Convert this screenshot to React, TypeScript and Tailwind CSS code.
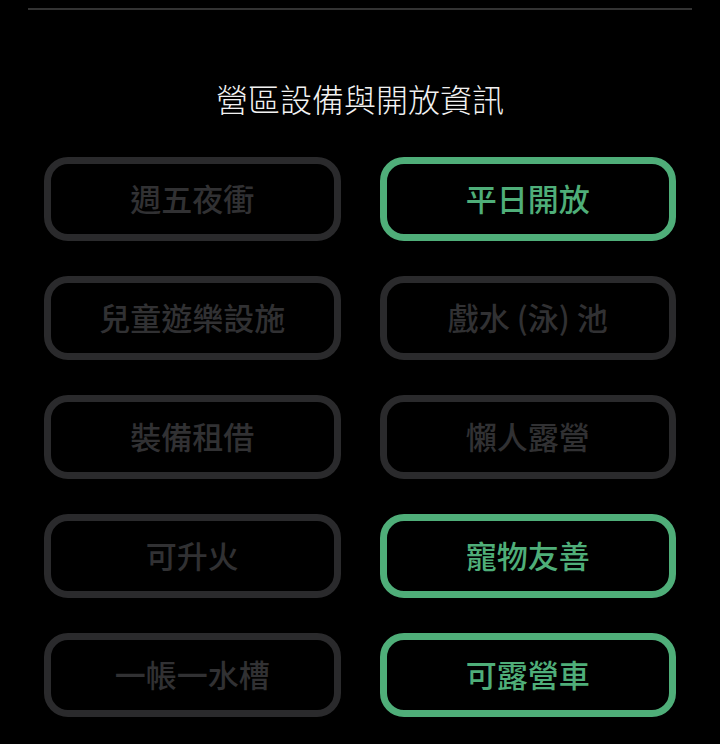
import React from "react";

const items: { label: string; on: boolean }[] = [
  { label: "週五夜衝", on: false },
  { label: "平日開放", on: true },
  { label: "兒童遊樂設施", on: false },
  { label: "戲水 (泳) 池", on: false },
  { label: "裝備租借", on: false },
  { label: "懶人露營", on: false },
  { label: "可升火", on: false },
  { label: "寵物友善", on: true },
  { label: "一帳一水槽", on: false },
  { label: "可露營車", on: true },
];

export default function App() {
  return (
    <div
      className="w-[720px] h-[744px] bg-black overflow-hidden px-[28px] pt-[8px]"
      style={{ fontFamily: '"Noto Sans CJK TC", "Noto Sans", sans-serif' }}
    >
      <div className="h-[2px] bg-[#333333]" />
      <h2 className="mt-[68px] h-[40px] leading-[40px] text-center text-[32px] font-light text-[#f2f2f2]">
        營區設備與開放資訊
      </h2>
      <div className="mt-[39px] mx-[16px] grid grid-cols-2 gap-x-[39px] gap-y-[35px]">
        {items.map((it) => (
          <div
            key={it.label}
            className={
              it.on
                ? "h-[84px] rounded-[24px] border-[7px] border-[#4fae79] flex items-center justify-center pb-[2px] text-[31px] font-medium text-[#4fae79]"
                : "h-[84px] rounded-[24px] border-[7px] border-[#2a2a2c] flex items-center justify-center pb-[2px] text-[31px] font-medium text-[#313133]"
            }
          >
            {it.label}
          </div>
        ))}
      </div>
    </div>
  );
}
